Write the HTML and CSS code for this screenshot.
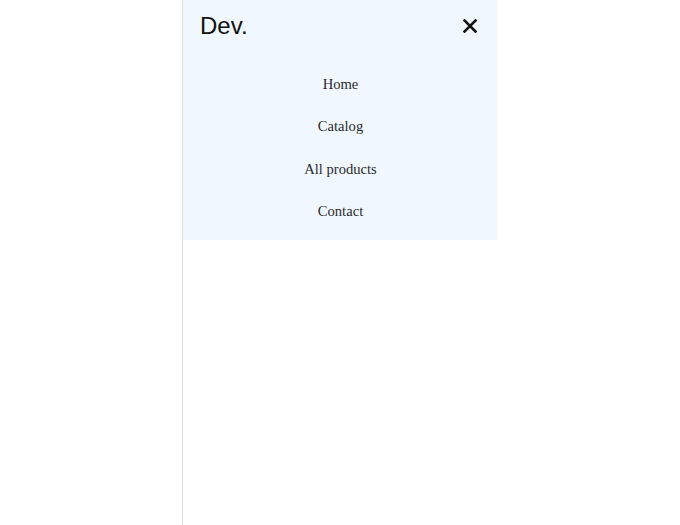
FILE: index.html
```html
<!DOCTYPE html>
<html>
<head>
<meta charset="utf-8">
<link rel="stylesheet" href="styles.css">
</head>
<body>
<div class="frame">
  <nav class="menu">
    <div class="menu-head">
      <span class="logo">Dev.</span>
      <button class="close" aria-label="Close">
        <svg width="14" height="14" viewBox="0 0 14 14"><path d="M1.5 1.5L12.5 12.5M12.5 1.5L1.5 12.5" stroke="#111" stroke-width="2.6" stroke-linecap="square"/></svg>
      </button>
    </div>
    <ul class="links">
      <li><a href="#">Home</a></li>
      <li><a href="#">Catalog</a></li>
      <li><a href="#">All products</a></li>
      <li><a href="#">Contact</a></li>
    </ul>
  </nav>
</div>
</body>
</html>
```

FILE: styles.css
```css
html, body {
  margin: 0;
  height: 100%;
  background: #fff;
}
.frame {
  width: 314px;
  min-height: 100%;
  margin-left: calc(50% - 158px);
  border-left: 1px solid #dedede;
}
.menu {
  background: #f0f7ff;
  height: 240px;
}
.menu-head {
  display: flex;
  justify-content: space-between;
  align-items: center;
  height: 52px;
  padding: 0 20px 0 17px;
}
.logo {
  font-family: "Liberation Sans", Arial, sans-serif;
  font-size: 24px;
  color: #111;
}
.close {
  background: none;
  border: 0;
  padding: 0;
  display: flex;
  width: 14px;
  height: 14px;
}
.links {
  list-style: none;
  margin: 0;
  padding: 11px 0 0 1px;
  text-align: center;
}
.links li {
  height: 42.33px;
  line-height: 42px;
}
.links a {
  font-family: "Liberation Serif", "Times New Roman", serif;
  font-size: 14.6px;
  color: #2a2a2a;
  text-decoration: none;
}
```
